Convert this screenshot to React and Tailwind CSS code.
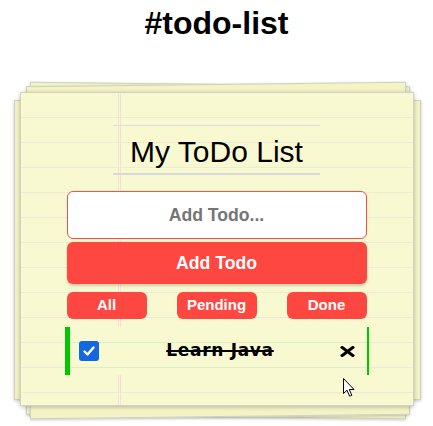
export default function App() {
  const sheetBase =
    "absolute border border-[#d0d0c2] bg-[#f3f3c6] shadow-[0_1px_3px_rgba(0,0,0,0.22)]";
  return (
    <div className="relative w-[433px] h-[426px] overflow-hidden bg-white font-['Liberation_Sans',Arial,sans-serif] text-black">
      <h1 className="pt-[5px] text-center text-[32px] leading-[37px] font-bold">#todo-list</h1>

      <div className="relative mx-auto mt-[50px] w-[394px]">
        <div className={`${sheetBase} -left-[6px] -right-[7px] top-[8px] bottom-[6px]`} />
        <div className={`${sheetBase} left-[8px] right-[6px] -top-[8px] -bottom-[11px] rotate-[0.7deg]`} />
        <div className={`${sheetBase} left-[8px] right-[6px] -top-[8px] -bottom-[11px] -rotate-[0.7deg]`} />

        <div className="relative border border-[#d3d3c5] bg-[#f9f9d1] bg-[image:linear-gradient(90deg,transparent_97px,#f3e0d6_97px,#f3e0d6_98px,transparent_98px,transparent_99px,#f3e0d6_99px,#f3e0d6_100px,transparent_100px),linear-gradient(180deg,transparent_24px,#ebebd8_24px,#ebebd8_25px)] bg-[size:100%_100%,100%_25px] shadow-[0_1px_4px_rgba(0,0,0,0.25)] pt-[32px] pb-[30px]">
          <h2 className="mx-auto w-[207px] border-t border-t-[#dedede] border-b-2 border-b-[#d8d8de] pt-[9px] pb-[4px] text-center text-[30px] leading-[34px] font-normal">
            My ToDo List
          </h2>

          <input
            type="text"
            placeholder="Add Todo..."
            className="mx-auto mt-[16px] block h-[48px] w-[300px] rounded-[6px] border border-[#ff4a45] bg-white text-center text-[17.6px] font-bold outline-none placeholder:text-[#757575]"
          />
          <button className="mx-auto mt-[3px] block h-[42px] w-[300px] rounded-[6px] bg-[#ff4742] text-[17.6px] font-bold text-white shadow-[0_2px_3px_rgba(0,0,0,0.18)]">
            Add Todo
          </button>

          <div className="mx-auto mt-[8px] flex w-[300px] justify-between">
            <button className="h-[27px] w-[80px] rounded-[6px] bg-[#ff4742] text-[15px] font-bold text-white">All</button>
            <button className="h-[27px] w-[80px] rounded-[6px] bg-[#ff4742] text-[15px] font-bold text-white">Pending</button>
            <button className="h-[27px] w-[80px] rounded-[6px] bg-[#ff4742] text-[15px] font-bold text-white">Done</button>
          </div>

          <div className="mx-auto mt-[8px] flex h-[48px] w-[304px] items-center border-l-[5px] border-r-[2px] border-[#00c800] bg-[#f9f9d1] bg-[image:linear-gradient(180deg,transparent_15px,#dcefc8_15px,#dcefc8_16px,transparent_16px,transparent_40px,#dcefc8_40px,#dcefc8_41px,transparent_41px)]">
            <div className="ml-[9px] flex h-[20px] w-[20px] items-center justify-center rounded-[3px] bg-[#1468df]">
              <svg width="14" height="14" viewBox="0 0 14 14">
                <path d="M2.5 7.5 L5.5 10.5 L11.5 3.5" fill="none" stroke="white" strokeWidth="2.4" strokeLinecap="round" strokeLinejoin="round" />
              </svg>
            </div>
            <span className="flex-1 pl-[2px] text-center font-['DejaVu_Sans',sans-serif] text-[17px] font-bold tracking-[0.7px] line-through decoration-2">
              Learn Java
            </span>
            <svg className="mr-[12px]" width="15" height="11" viewBox="0 0 15 11">
              <path d="M1 0.5 L14 10.5 M14 0.5 L1 10.5" stroke="black" strokeWidth="3" strokeLinecap="butt" />
            </svg>
          </div>
        </div>
      </div>

      <svg className="absolute left-[343px] top-[378px]" width="13" height="20" viewBox="0 0 13 20">
        <path d="M0.5 0.5 L0.5 15.5 L4 12.2 L6.6 18.2 L8.8 17.3 L6.3 11.5 L11 11.5 Z" fill="white" stroke="black" strokeWidth="1" strokeLinejoin="round" />
      </svg>
    </div>
  );
}
